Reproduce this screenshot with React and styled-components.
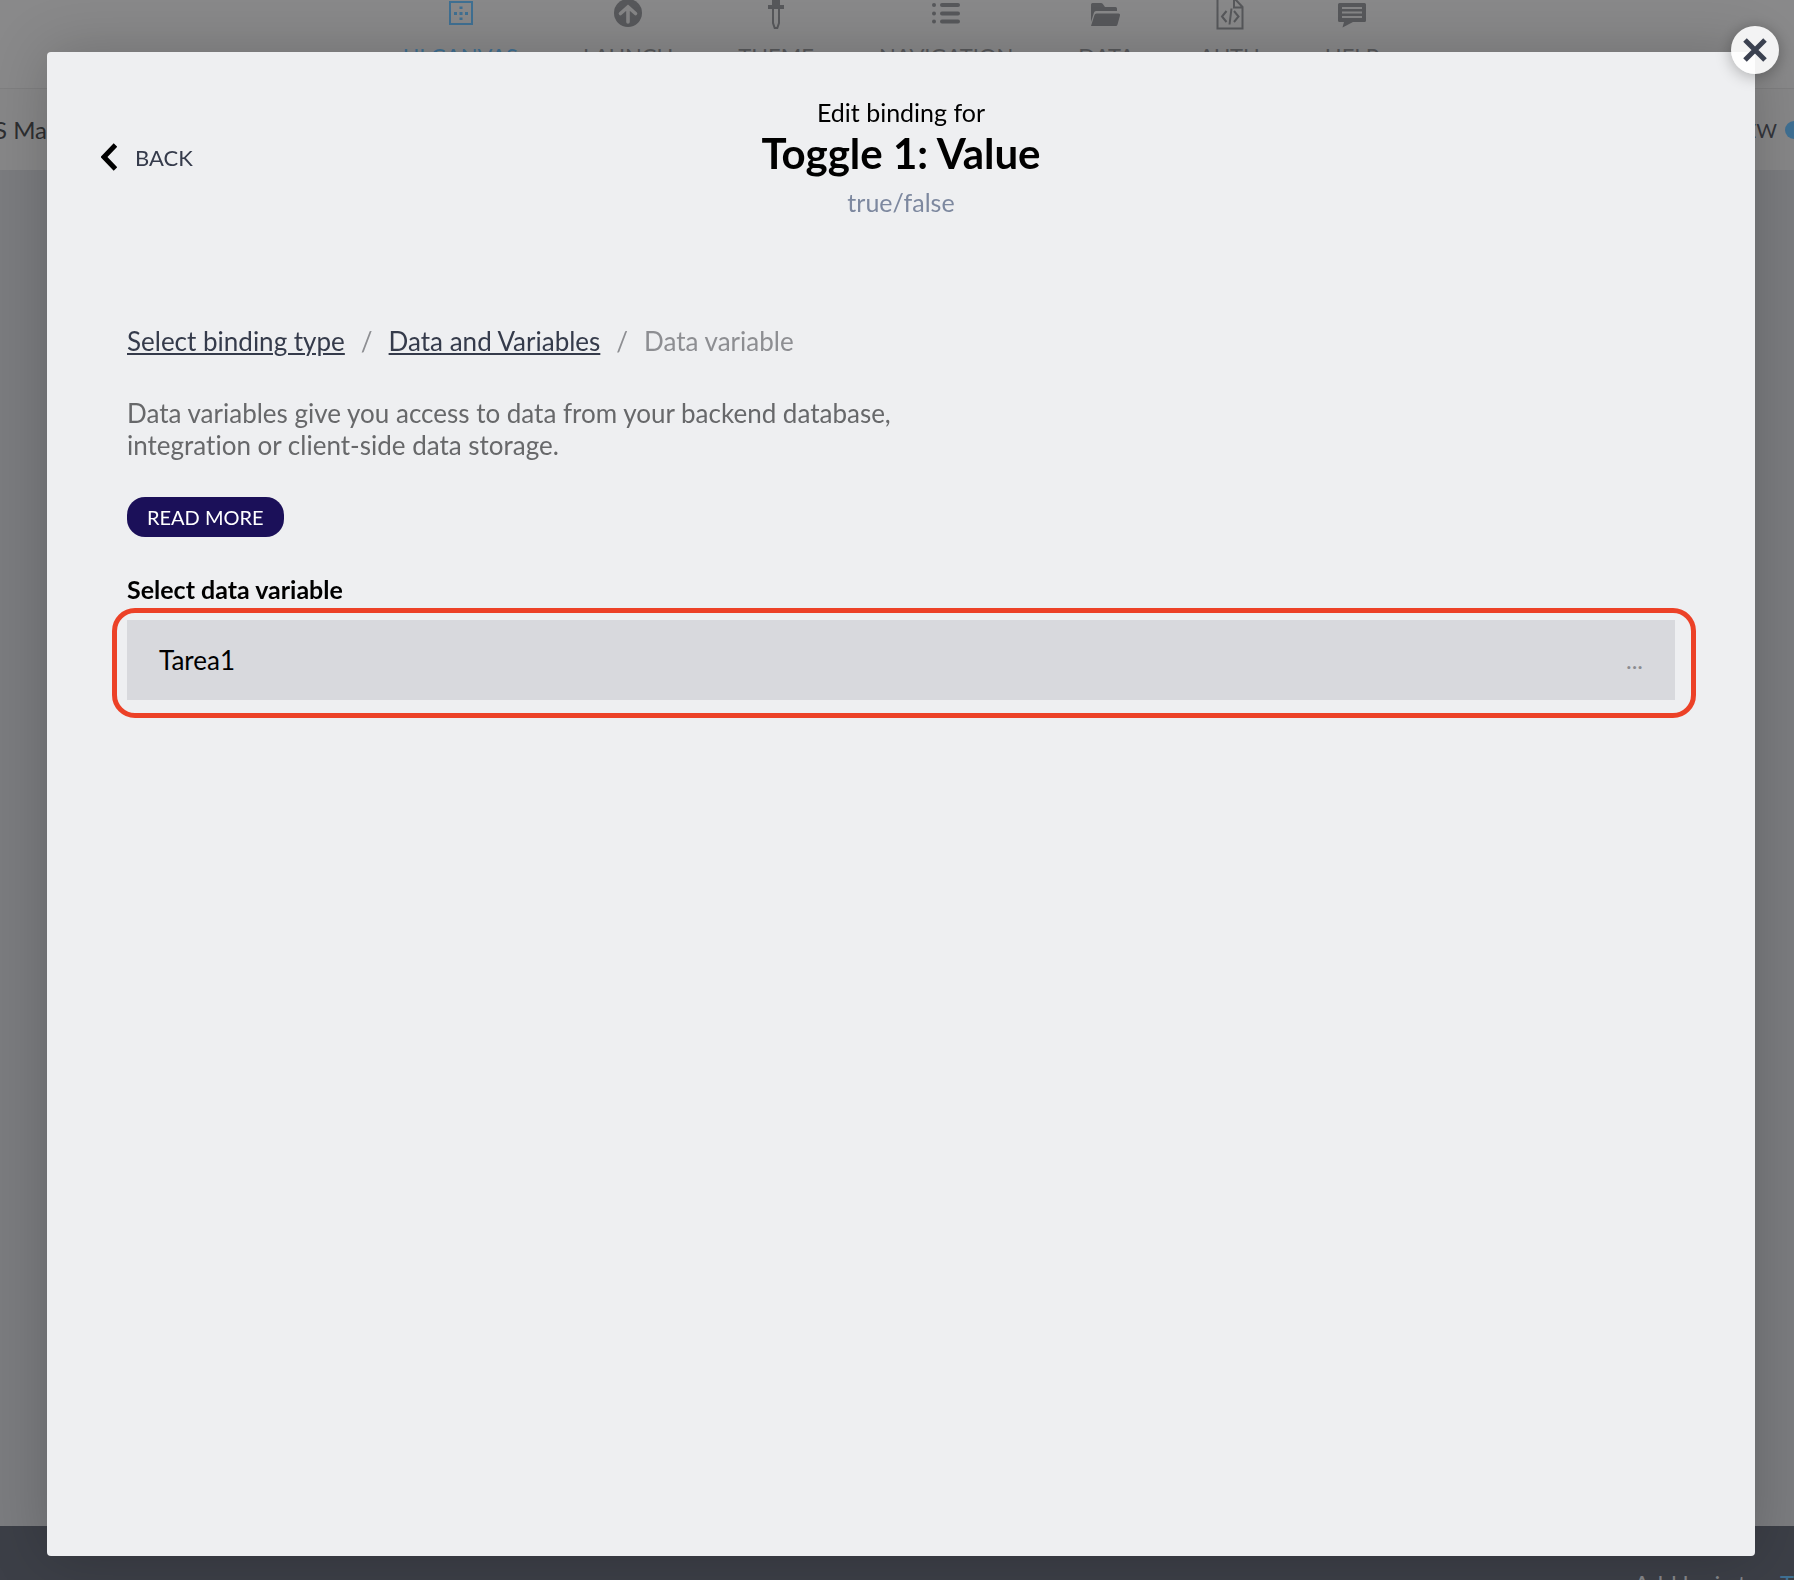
import React from "react";
import styled, { createGlobalStyle } from "styled-components";

const GlobalStyle = createGlobalStyle`
  *, *::before, *::after { box-sizing: border-box; }
  body {
    margin: 0;
    overflow: hidden;
    font-family: Lato, "Open Sans", sans-serif;
    font-size: 24px;
    line-height: 32px;
    color: #000;
  }
  button { font-family: inherit; border: 0; padding: 0; background: none; cursor: pointer; }
  h1, h2, p, ol { margin: 0; padding: 0; }
`;

const Page = styled.div`
  display: flex;
  flex-direction: column;
  height: 100vh;
  overflow: hidden;
  background: #7b7c7f;
`;

const TopNav = styled.nav`
  display: flex;
  justify-content: center;
  gap: 65px;
  height: 89px;
  padding-right: 12px;
  border-bottom: 1px solid #7f7f80;
  background: #89898a;
`;

const NavItem = styled.a`
  display: flex;
  flex-direction: column;
  align-items: center;
  gap: 12px;
  font-size: 22px;
  line-height: 24px;
  text-decoration: none;
  color: ${(p) => (p.$active ? "#3f7093" : "#57585b")};
`;

const SubBar = styled.div`
  display: flex;
  align-items: center;
  justify-content: space-between;
  height: 81px;
  padding-right: 17px;
  background: #878788;
`;

const Crumb = styled.span`
  margin-left: -6px;
  color: #2d2e30;
`;

const ViewToggle = styled.span`
  display: flex;
  align-items: center;
  gap: 8px;
  margin-right: -26px;
  font-size: 20px;
  color: #33353b;
`;

const Dot = styled.span`
  width: 18px;
  height: 18px;
  border-radius: 50%;
  background: #3f7093;
`;

const Canvas = styled.div`
  flex: 1;
`;

const LogicBar = styled.footer`
  display: flex;
  justify-content: flex-end;
  gap: 20px;
  height: 54px;
  padding-top: 42px;
  background: #3c3f47;
  color: #85868a;
  white-space: nowrap;
`;

const LogicTarget = styled.span`
  width: 14px;
  color: #3f7093;
`;

const Backdrop = styled.div`
  position: fixed;
  inset: 0;
  display: flex;
  padding: 52px 39px 24px 47px;
`;

const Dialog = styled.section`
  position: relative;
  flex: 1;
  padding: 44px 80px 80px;
  border-radius: 4px;
  background: #eeeff1;
  box-shadow: 0 0 60px rgba(0, 0, 0, 0.2);
`;

const CloseButton = styled.button`
  position: absolute;
  top: -26px;
  right: -24px;
  display: grid;
  place-items: center;
  width: 48px;
  height: 48px;
  border-radius: 50%;
  background: rgba(255, 255, 255, 0.9);
  box-shadow: 0 2px 16px rgba(0, 0, 0, 0.3);
`;

const Header = styled.header`
  display: grid;
  grid-template-columns: 1fr auto 1fr;
  align-items: center;
  margin: 0 -26px;
`;

const BackButton = styled.button`
  justify-self: start;
  display: flex;
  align-items: center;
  gap: 18px;
  font-size: 22px;
  color: #353b4b;
`;

const Heading = styled.div`
  text-align: center;
`;

const Title = styled.h1`
  font-size: 42px;
  line-height: 50px;
  font-weight: 700;
`;

const Kicker = styled.p`
  font-size: 25px;
`;

const TypeHint = styled.p`
  margin-top: 8px;
  font-size: 25px;
  color: #7d889f;
`;

const Breadcrumbs = styled.ol`
  display: flex;
  gap: 16px;
  margin-top: 107px;
  list-style: none;
  font-size: 26px;
  color: #8d8e92;
`;

const BreadcrumbItem = styled.li`
  display: flex;
  gap: 16px;

  &:not(:last-child)::after {
    content: "/";
  }
`;

const BreadcrumbLink = styled.a`
  color: #353b4b;
  text-decoration: underline;
  text-decoration-thickness: 2px;
  text-underline-offset: 2px;
`;

const Description = styled.p`
  max-width: 800px;
  margin-top: 40px;
  font-size: 26px;
  font-variant-ligatures: none;
  color: #67686a;
`;

const ReadMore = styled.button`
  display: block;
  height: 40px;
  margin-top: 36px;
  padding: 0 20px;
  border-radius: 18px;
  background: #1b1059;
  color: #fff;
  font-size: 20px;
  line-height: 40px;
`;

const FieldLabel = styled.h2`
  margin-top: 36px;
  font-size: 25px;
  line-height: 32px;
  font-weight: 700;
`;

const VariableList = styled.div`
  position: relative;
  margin-top: 15px;

  &::after {
    content: "";
    position: absolute;
    inset: -12px -21px -18px -15px;
    border: 5px solid #ec4127;
    border-radius: 23px;
    pointer-events: none;
  }
`;

const VariableRow = styled.button`
  display: flex;
  align-items: center;
  justify-content: space-between;
  width: 100%;
  height: 80px;
  padding: 0 32px;
  background: #d8d9dd;
  font-size: 26px;
  line-height: 32px;
`;

const More = styled.span`
  font-size: 24px;
  color: #8b8c90;
`;

const icons = {
  canvas: (
    <svg width="28" height="32" viewBox="0 0 28 32" fill="currentColor" aria-hidden="true">
      <path fillRule="evenodd" d="M2 1h24v24H2zM4 3v20h20V3z" />
      <path d="M12.500 6.500h3v2.500h-3zM12.500 12h3v3h-3zM12.500 17.500h3v2.500h-3zM7 12h3v3H7zM18 12h3v3h-3z" />
    </svg>
  ),
  launch: (
    <svg width="28" height="32" viewBox="0 0 28 32" aria-hidden="true">
      <circle cx="14" cy="13" r="14" fill="currentColor" />
      <path d="M14 22V7M6.500 13.500 14 7l7.500 6.500" fill="none" stroke="#868687" strokeWidth="3.600" strokeLinecap="round" />
    </svg>
  ),
  theme: (
    <svg width="28" height="32" viewBox="0 0 28 32" aria-hidden="true">
      <path d="M10 0h8v5h4v4H6V5h4z" fill="currentColor" />
      <path d="M11 9v14l1.700 5h2.600l1.700-5V9" fill="none" stroke="currentColor" strokeWidth="2" />
    </svg>
  ),
  navigation: (
    <svg width="28" height="32" viewBox="0 0 28 32" fill="currentColor" aria-hidden="true">
      {[5, 13.5, 21.5].map((y) => (
        <g key={y}>
          <circle cx="2" cy={y} r="2" />
          <rect x="8" y={y - 2} width="20" height="4" rx="2" />
        </g>
      ))}
    </svg>
  ),
  data: (
    <svg width="30" height="32" viewBox="0 0 30 32" fill="currentColor" aria-hidden="true">
      <path d="M0 4.500Q0 3 1.500 3H10q1 0 1.700.8L14 7h10.500Q26 7 26 8.500V11H5Q3.400 11 3 12.500L0 22z" />
      <path d="M5.500 13.500h22q2 0 1.500 2l-2.500 9q-.3 1.500-1.800 1.500H0l3.500-11q.4-1.500 2-1.500z" />
    </svg>
  ),
  auth: (
    <svg width="28" height="32" viewBox="0 0 28 32" fill="none" stroke="currentColor" strokeWidth="2" aria-hidden="true">
      <path d="M1.500-3v31.500h25V7L18-2v9.500h8.500" />
      <path d="M10.500 11 6 16.500l4.500 5.500M18 11l4.500 5.500L18 22M15.500 8.500l-2 16" />
    </svg>
  ),
  help: (
    <svg width="28" height="32" viewBox="0 0 28 32" aria-hidden="true">
      <path d="M1.500 3h25Q28 3 28 4.500v16q0 1.500-1.500 1.500H15L4.500 27.500 6 22H1.500Q0 22 0 20.500v-16Q0 3 1.500 3z" fill="currentColor" />
      <path d="M4 8h20M4 12.500h20M4 17h20" stroke="#868687" strokeWidth="2" />
    </svg>
  ),
};

const navItems = [
  { id: "canvas", label: "UI CANVAS", active: true },
  { id: "launch", label: "LAUNCH" },
  { id: "theme", label: "THEME" },
  { id: "navigation", label: "NAVIGATION" },
  { id: "data", label: "DATA" },
  { id: "auth", label: "AUTH" },
  { id: "help", label: "HELP" },
];

export default function App() {
  return (
    <>
      <GlobalStyle />
      <Page>
        <TopNav>
          {navItems.map(({ id, label, active }) => (
            <NavItem key={id} href={`#${id}`} $active={active}>
              {icons[id]}
              {label}
            </NavItem>
          ))}
        </TopNav>
        <SubBar>
          <Crumb>S Ma</Crumb>
          <ViewToggle>
            EW
            <Dot />
          </ViewToggle>
        </SubBar>
        <Canvas />
        <LogicBar>
          <span>Add logic to</span>
          <LogicTarget>T</LogicTarget>
        </LogicBar>
      </Page>
      <Backdrop>
        <Dialog role="dialog" aria-labelledby="dialog-title">
          <CloseButton aria-label="Close">
            <svg width="24" height="24" viewBox="0 0 24 24" fill="none" stroke="#3b4150" strokeWidth="5" aria-hidden="true">
              <path d="M2 2l20 20M22 2 2 22" />
            </svg>
          </CloseButton>
          <Header>
            <BackButton>
              <svg width="16" height="28" viewBox="0 0 16 28" fill="none" stroke="#000" strokeWidth="5" aria-hidden="true">
                <path d="M14.500 2 3 14l11.500 12" />
              </svg>
              BACK
            </BackButton>
            <Heading>
              <Kicker>Edit binding for</Kicker>
              <Title id="dialog-title">Toggle 1: Value</Title>
              <TypeHint>true/false</TypeHint>
            </Heading>
          </Header>
          <Breadcrumbs>
            <BreadcrumbItem>
              <BreadcrumbLink href="#binding-type">Select binding type</BreadcrumbLink>
            </BreadcrumbItem>
            <BreadcrumbItem>
              <BreadcrumbLink href="#data-and-variables">Data and Variables</BreadcrumbLink>
            </BreadcrumbItem>
            <BreadcrumbItem aria-current="page">Data variable</BreadcrumbItem>
          </Breadcrumbs>
          <Description>
            Data variables give you access to data from your backend database, integration or
            client-side data storage.
          </Description>
          <ReadMore>READ MORE</ReadMore>
          <FieldLabel id="variable-label">Select data variable</FieldLabel>
          <VariableList role="group" aria-labelledby="variable-label">
            <VariableRow>
              <span>Tarea1</span>
              <More>...</More>
            </VariableRow>
          </VariableList>
        </Dialog>
      </Backdrop>
    </>
  );
}
